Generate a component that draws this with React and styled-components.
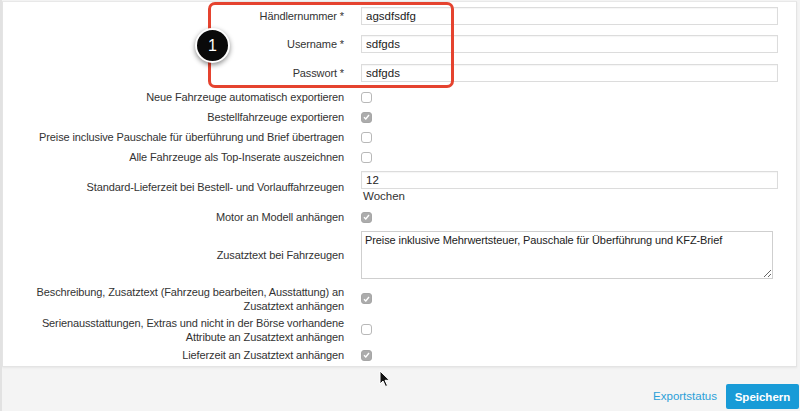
import React from 'react';
import styled, { createGlobalStyle } from 'styled-components';

const GlobalStyle = createGlobalStyle`
  html, body {
    margin: 0;
    padding: 0;
    background: #f4f4f4;
  }
  body {
    font-family: "Liberation Sans", Arial, sans-serif;
    font-size: 11px;
    color: #333;
  }
`;

const Page = styled.div`
  position: relative;
  width: 800px;
  height: 411px;
  overflow: hidden;
  background: #f4f4f4;
  display: flex;
  flex-direction: column;
  border-left: 2px solid #e2e2e2;
  box-sizing: border-box;
`;

const Panel = styled.div`
  margin: 1px 3px 0 0;
  background: #fff;
  border: 1px solid #e4e4e4;
  border-top-color: #e8e8e8;
  box-shadow: 0 1px 2px rgba(0, 0, 0, 0.06);
  display: flex;
  flex-direction: column;
  padding: 0 0 1px 0;
`;

const Row = styled.div`
  display: grid;
  grid-template-columns: 1fr 417px;
  column-gap: 17px;
  align-items: center;
  padding-right: 18px;
  height: ${(p) => p.h}px;
  box-sizing: border-box;
`;

const Label = styled.label`
  text-align: right;
  line-height: 14px;
  font-size: 11px;
  letter-spacing: -0.12px;
  color: #333;
  white-space: nowrap;
`;

const Field = styled.div`
  display: flex;
  flex-direction: column;
  align-items: flex-start;
`;

const Input = styled.input`
  width: 100%;
  height: 18px;
  box-sizing: border-box;
  border: 1px solid #dcdcdc;
  box-shadow: inset 0 1px 1px rgba(0, 0, 0, 0.04);
  padding: 0 4px;
  font-family: inherit;
  font-size: 11.5px;
  color: #222;
  outline: none;
`;

const Hint = styled.span`
  margin: 1px 0 0 2px;
  line-height: 13px;
  font-size: 11.5px;
  color: #333;
`;

const TextArea = styled.textarea`
  width: 412px;
  height: 48px;
  box-sizing: border-box;
  border: 1px solid #cfcfcf;
  padding: 1px 3px;
  font-family: inherit;
  font-size: 11px;
  letter-spacing: -0.1px;
  line-height: 14px;
  color: #222;
  resize: both;
  outline: none;
`;

const Box = styled.span`
  width: 11px;
  height: 11px;
  box-sizing: border-box;
  border-radius: 3px;
  border: 1px solid ${(p) => (p.checked ? '#a6a6a6' : '#b8b8b8')};
  background: ${(p) => (p.checked ? '#acacac' : '#fff')};
  display: flex;
  align-items: center;
  justify-content: center;
`;

const Footer = styled.div`
  flex: 1;
  display: flex;
  justify-content: flex-end;
  align-items: flex-start;
  padding: 17px 1px 0 0;
  gap: 9px;
`;

const LinkButton = styled.a`
  color: #2b9fd8;
  font-size: 11.5px;
  line-height: 25px;
  text-decoration: none;
`;

const SaveButton = styled.button`
  height: 25px;
  width: 73px;
  border: none;
  border-radius: 2px;
  background: #189bd7;
  color: #fff;
  font-family: inherit;
  font-size: 11.5px;
  font-weight: bold;
  padding: 0;
`;

const Highlight = styled.div`
  position: absolute;
  left: 206px;
  top: 2px;
  width: 246px;
  height: 86px;
  box-sizing: border-box;
  border: 3px solid #e5432f;
  border-radius: 7px;
  pointer-events: none;
`;

const Badge = styled.div`
  position: absolute;
  left: 193px;
  top: 28px;
  width: 31px;
  height: 31px;
  border-radius: 50%;
  background: #0a0a0a;
  border: 2.5px solid #fff;
  box-shadow: 0 2px 5px rgba(0, 0, 0, 0.45);
  color: #fff;
  font-size: 16px;
  display: flex;
  align-items: center;
  justify-content: center;
`;

const Cursor = styled.svg`
  position: absolute;
  left: 377px;
  top: 370px;
`;

const Check = ({ checked }) => (
  <Box checked={checked}>
    {checked && (
      <svg width="7" height="6" viewBox="0 0 7 6">
        <path d="M1 3.2 L2.8 5 L6 1" fill="none" stroke="#fff" strokeWidth="1.4" />
      </svg>
    )}
  </Box>
);

const CheckRow = ({ label, checked, h = 20 }) => (
  <Row h={h}>
    <Label>{label}</Label>
    <Check checked={checked} />
  </Row>
);

export default function App() {
  return (
    <>
      <GlobalStyle />
      <Page>
        <Panel>
          <Row h={28}>
            <Label>Händlernummer *</Label>
            <Input defaultValue="agsdfsdfg" />
          </Row>
          <Row h={28}>
            <Label>Username *</Label>
            <Input defaultValue="sdfgds" />
          </Row>
          <Row h={29}>
            <Label>Passwort *</Label>
            <Input defaultValue="sdfgds" />
          </Row>
          <CheckRow label="Neue Fahrzeuge automatisch exportieren" />
          <CheckRow label="Bestellfahrzeuge exportieren" checked />
          <CheckRow label="Preise inclusive Pauschale für überführung und Brief übertragen" />
          <CheckRow label="Alle Fahrzeuge als Top-Inserate auszeichnen" />
          <Row h={40}>
            <Label>Standard-Lieferzeit bei Bestell- und Vorlauffahrzeugen</Label>
            <Field>
              <Input defaultValue="12" />
              <Hint>Wochen</Hint>
            </Field>
          </Row>
          <CheckRow label="Motor an Modell anhängen" checked />
          <Row h={56}>
            <Label>Zusatztext bei Fahrzeugen</Label>
            <TextArea defaultValue="Preise inklusive Mehrwertsteuer, Pauschale für Überführung und KFZ-Brief" />
          </Row>
          <CheckRow
            h={31}
            checked
            label={<>Beschreibung, Zusatztext (Fahrzeug bearbeiten, Ausstattung) an<br />Zusatztext anhängen</>}
          />
          <CheckRow
            h={31}
            label={<>Serienausstattungen, Extras und nicht in der Börse vorhandene<br />Attribute an Zusatztext anhängen</>}
          />
          <CheckRow label="Lieferzeit an Zusatztext anhängen" checked />
        </Panel>
        <Footer>
          <LinkButton href="#">Exportstatus</LinkButton>
          <SaveButton>Speichern</SaveButton>
        </Footer>
        <Highlight />
        <Badge>1</Badge>
        <Cursor width="12" height="18" viewBox="0 0 12 18">
          <path d="M1 1 L1 14 L4 11 L6.5 16.5 L8.5 15.6 L6 10.3 L10.5 10.3 Z" fill="#111" stroke="#fff" strokeWidth="1" />
        </Cursor>
      </Page>
    </>
  );
}
